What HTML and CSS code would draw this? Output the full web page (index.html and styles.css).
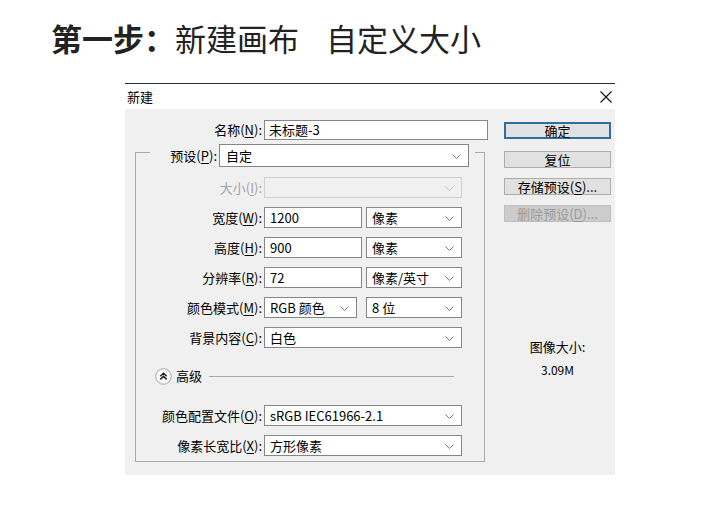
FILE: index.html
```html
<!DOCTYPE html>
<html lang="zh-CN">
<head>
<meta charset="utf-8">
<title>新建画布</title>
<link rel="stylesheet" href="styles.css">
</head>
<body>
<div class="heading"><span class="heading-text"><b>第一步：</b>新建画布<span class="gap">自定义大小</span></span></div>

<div class="dialog">
  <div class="titlebar">
    <span class="title">新建</span>
    <svg class="close" width="12" height="12" viewBox="0 0 12 12"><path d="M0.5 0.5 L11.5 11.5 M11.5 0.5 L0.5 11.5" stroke="#111" stroke-width="1.1" fill="none"/></svg>
  </div>
  <div class="body">
    <div class="left">
      <div class="row name-row">
        <label class="lbl lbl-name">名称(<u>N</u>):</label>
        <div class="field w-name">未标题-3</div>
      </div>
      <div class="group">
        <div class="preset-row">
          <label class="lbl lbl-preset">预设(<u>P</u>):</label>
          <div class="field select w-preset">自定<svg class="chev" width="9" height="5" viewBox="0 0 9 5"><path d="M0.5 0.5 L4.5 4.5 L8.5 0.5" stroke="#777" fill="none"/></svg></div>
        </div>
        <div class="row first">
          <label class="lbl dis">大小(<u>I</u>):</label>
          <div class="field select disabled w-full"><svg class="chev" width="9" height="5" viewBox="0 0 9 5"><path d="M0.5 0.5 L4.5 4.5 L8.5 0.5" stroke="#c4c4c4" fill="none"/></svg></div>
        </div>
        <div class="row">
          <label class="lbl">宽度(<u>W</u>):</label>
          <div class="field w-num">1200</div>
          <div class="field select w-unit">像素<svg class="chev" width="9" height="5" viewBox="0 0 9 5"><path d="M0.5 0.5 L4.5 4.5 L8.5 0.5" stroke="#777" fill="none"/></svg></div>
        </div>
        <div class="row">
          <label class="lbl">高度(<u>H</u>):</label>
          <div class="field w-num">900</div>
          <div class="field select w-unit">像素<svg class="chev" width="9" height="5" viewBox="0 0 9 5"><path d="M0.5 0.5 L4.5 4.5 L8.5 0.5" stroke="#777" fill="none"/></svg></div>
        </div>
        <div class="row">
          <label class="lbl">分辨率(<u>R</u>):</label>
          <div class="field w-num">72</div>
          <div class="field select w-unit">像素/英寸<svg class="chev" width="9" height="5" viewBox="0 0 9 5"><path d="M0.5 0.5 L4.5 4.5 L8.5 0.5" stroke="#777" fill="none"/></svg></div>
        </div>
        <div class="row">
          <label class="lbl">颜色模式(<u>M</u>):</label>
          <div class="field select w-mode">RGB 颜色<svg class="chev" width="9" height="5" viewBox="0 0 9 5"><path d="M0.5 0.5 L4.5 4.5 L8.5 0.5" stroke="#777" fill="none"/></svg></div>
          <div class="field select w-unit">8 位<svg class="chev" width="9" height="5" viewBox="0 0 9 5"><path d="M0.5 0.5 L4.5 4.5 L8.5 0.5" stroke="#777" fill="none"/></svg></div>
        </div>
        <div class="row">
          <label class="lbl">背景内容(<u>C</u>):</label>
          <div class="field select w-full">白色<svg class="chev" width="9" height="5" viewBox="0 0 9 5"><path d="M0.5 0.5 L4.5 4.5 L8.5 0.5" stroke="#777" fill="none"/></svg></div>
        </div>
        <div class="advanced">
          <svg class="adv-icon" width="17" height="17" viewBox="0 0 17 17"><circle cx="8.5" cy="8.5" r="7.8" fill="#f8f8f8" stroke="#a8a8a8"/><path d="M5.3 8.2 L8.5 5.2 L11.7 8.2 M5.3 11.4 L8.5 8.4 L11.7 11.4" stroke="#222" stroke-width="1.5" fill="none"/></svg>
          <span class="adv-text">高级</span>
          <span class="adv-line"></span>
        </div>
        <div class="row">
          <label class="lbl">颜色配置文件(<u>O</u>):</label>
          <div class="field select w-full">sRGB IEC61966-2.1<svg class="chev" width="9" height="5" viewBox="0 0 9 5"><path d="M0.5 0.5 L4.5 4.5 L8.5 0.5" stroke="#777" fill="none"/></svg></div>
        </div>
        <div class="row">
          <label class="lbl">像素长宽比(<u>X</u>):</label>
          <div class="field select w-full">方形像素<svg class="chev" width="9" height="5" viewBox="0 0 9 5"><path d="M0.5 0.5 L4.5 4.5 L8.5 0.5" stroke="#777" fill="none"/></svg></div>
        </div>
      </div>
    </div>
    <div class="right">
      <div class="btn default">确定</div>
      <div class="btn">复位</div>
      <div class="btn">存储预设(<u>S</u>)...</div>
      <div class="btn off">删除预设(<u>D</u>)...</div>
      <div class="size-label">图像大小:</div>
      <div class="size-value">3.09M</div>
    </div>
  </div>
</div>
</body>
</html>
```
FILE: styles.css
```css
* { box-sizing: border-box; }
html, body { margin: 0; padding: 0; background: #fff; }
body {
  font-family: "Noto Sans CJK SC", "Noto Sans", sans-serif;
  color: #000;
  width: 703px;
  height: 515px;
  overflow: hidden;
}
.heading {
  height: 83px;
  padding: 20px 0 0 51px;
}
.heading-text {
  display: inline-block;
  font-size: 31px;
  line-height: 35px;
  color: #222;
  white-space: nowrap;
}
.heading-text b { font-weight: 700; }
.heading-text .gap { margin-left: 27px; }

.dialog {
  margin-left: 125px;
  width: 490px;
  border-top: 1px solid #26343d;
}
.titlebar {
  height: 25px;
  background: #fff;
  display: flex;
  align-items: center;
  justify-content: space-between;
  padding: 0 3px 0 2px;
}
.title { font-size: 13px; line-height: 16px; }
.close { display: block; margin-top: 1px; }

.body {
  height: 366px;
  background: #f0f0f0;
  display: flex;
  font-size: 13px;
}
.left { width: 365px; padding-top: 11px; }
.right {
  width: 107px;
  margin-left: 14px;
  padding-top: 13px;
  display: flex;
  flex-direction: column;
  align-items: stretch;
}

.row { display: flex; align-items: center; height: 21px; margin-top: 9px; }
.row.first { margin-top: 10px; }
.name-row { margin-top: 0; height: 20px; }

.lbl {
  width: 126px;
  text-align: right;
  margin-right: 2px;
  font-size: 13px;
  line-height: 16px;
  white-space: nowrap;
}
.lbl-name { width: 137px; }
.lbl.dis { color: #a3a3a3; }
u { text-decoration-thickness: 1px; text-underline-offset: 2px; }

.field {
  position: relative;
  height: 100%;
  background: #fff;
  border: 1px solid #868686;
  padding-left: 5px;
  font-size: 13px;
  line-height: 19px;
  white-space: nowrap;
}
.select .chev { position: absolute; right: 7px; top: 8px; }
.field.disabled { background: #f0f0f0; border-color: #cfcfcf; }
.w-name { width: 224px; padding-left: 4px; line-height: 18px; }
.w-preset { width: 250px; height: 23px; line-height: 21px; padding-left: 6px; }
.w-preset .chev { top: 9px; right: 7px; }
.w-full { width: 198px; }
.w-num { width: 98px; margin-right: 4px; }
.w-mode { width: 93px; margin-right: 9px; }
.w-unit { width: 96px; }

.group {
  margin: 12px 0 0 10px;
  width: 350px;
  border: 1px solid #a9a9a9;
  padding-bottom: 5px;
}
.preset-row {
  display: flex;
  align-items: center;
  margin: -9px 0 0 14px;
  width: 325px;
  height: 23px;
  background: #f0f0f0;
}
.lbl-preset { width: 67px; }

.advanced {
  display: flex;
  align-items: center;
  height: 18px;
  margin: 19px 0 0 19px;
}
.adv-icon { display: block; }
.adv-text { margin-left: 4px; font-size: 13px; line-height: 16px; }
.adv-line {
  width: 245px;
  margin-left: 7px;
  border-top: 1px solid #a9a9a9;
  margin-top: 1px;
}
.advanced + .row { margin-top: 20px; }

.btn {
  height: 17px;
  background: #e1e1e1;
  border: 1px solid #adadad;
  text-align: center;
  font-size: 13px;
  line-height: 15px;
  margin-bottom: 10px;
}
.btn.default { border: 2px solid #2f6fa0; line-height: 13px; margin-bottom: 12px; }
.btn.off { background: #cccccc; border-color: #bfbfbf; color: #9b9b9b; }
.size-label {
  margin-top: 107px;
  text-align: center;
  font-size: 13px;
  line-height: 16px;
}
.size-value {
  margin-top: 7px;
  text-align: center;
  font-size: 12px;
  line-height: 16px;
}
```
